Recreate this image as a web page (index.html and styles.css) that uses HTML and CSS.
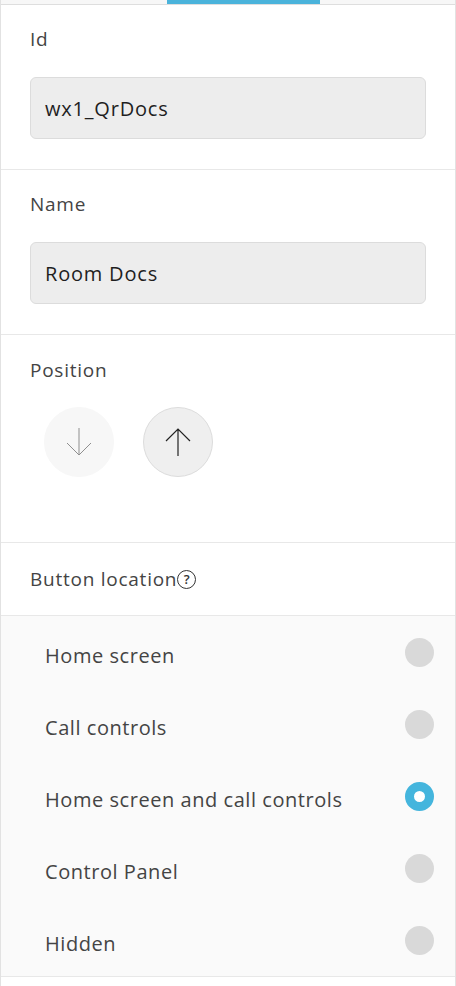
FILE: index.html
```html
<!DOCTYPE html>
<html>
<head>
<meta charset="utf-8">
<link rel="stylesheet" href="styles.css">
</head>
<body>
<div class="panel">
  <div class="tabs"><div class="tab-active"></div></div>
  <div class="section sec-id">
    <div class="label">Id</div>
    <div class="input">wx1_QrDocs</div>
  </div>
  <div class="section sec-name">
    <div class="label">Name</div>
    <div class="input">Room Docs</div>
  </div>
  <div class="section sec-pos">
    <div class="label">Position</div>
    <div class="pos-buttons">
      <div class="circle-btn disabled">
        <svg width="28" height="30" viewBox="0 0 28 30"><path d="M14 1 V28 M2 16 L14 28 L26 16" fill="none" stroke="#8f8f8f" stroke-width="1"/></svg>
      </div>
      <div class="circle-btn">
        <svg width="28" height="30" viewBox="0 0 28 30"><path d="M14 29 V2 M2 14 L14 2 L26 14" fill="none" stroke="#222" stroke-width="1.2"/></svg>
      </div>
    </div>
  </div>
  <div class="section sec-loc">
    <div class="label">Button location<span class="help">?</span></div>
  </div>
  <div class="list">
    <div class="item"><span>Home screen</span><span class="radio"></span></div>
    <div class="item"><span>Call controls</span><span class="radio"></span></div>
    <div class="item"><span>Home screen and call controls</span><span class="radio checked"></span></div>
    <div class="item"><span>Control Panel</span><span class="radio"></span></div>
    <div class="item"><span>Hidden</span><span class="radio"></span></div>
  </div>
</div>
</body>
</html>
```
FILE: styles.css
```css
html, body {
  margin: 0;
  padding: 0;
  background: #fff;
}
body {
  font-family: "Open Sans", "Liberation Sans", sans-serif;
  color: #444;
}
.panel {
  width: 454px;
  min-height: 986px;
  border-left: 1px solid #e2e2e2;
  border-right: 1px solid #e2e2e2;
  box-sizing: content-box;
}
.tabs {
  height: 4px;
  background: #f7f7f7;
  border-bottom: 1px solid #dedede;
  position: relative;
}
.tab-active {
  position: absolute;
  left: 166px;
  top: 0;
  width: 153px;
  height: 4px;
  background: #4ab3db;
}
.section {
  padding: 22px 29px 30px 29px;
  border-bottom: 1px solid #e8e8e8;
}
.label {
  font-size: 19px;
  letter-spacing: 0.75px;
  line-height: 24px;
  color: #444;
  display: flex;
  align-items: center;
}
.input {
  margin-top: 26px;
  height: 60px;
  border: 1px solid #dcdcdc;
  border-radius: 6px;
  background: #ededed;
  box-sizing: content-box;
  padding: 0 14px;
  display: flex;
  align-items: center;
  font-size: 20px;
  letter-spacing: 0.8px;
  color: #1f1f1f;
}
.sec-pos {
  padding-top: 23px;
  padding-bottom: 65px;
}
.pos-buttons {
  margin-top: 25px;
  display: flex;
  gap: 29px;
  padding-left: 14px;
}
.circle-btn {
  width: 70px;
  height: 70px;
  border-radius: 50%;
  background: #efefef;
  border: 1px solid #dcdcdc;
  box-sizing: border-box;
  display: flex;
  align-items: center;
  justify-content: center;
}
.circle-btn.disabled {
  background: #f7f7f7;
  border-color: #f7f7f7;
}
.sec-loc {
  padding-top: 24px;
  padding-bottom: 24px;
}
.help {
  display: inline-flex;
  width: 17px;
  height: 17px;
  border: 1.5px solid #333;
  border-radius: 50%;
  align-items: center;
  justify-content: center;
  font-size: 13px;
  line-height: 1;
  letter-spacing: 0;
  color: #333;
  margin-left: 0;
  font-weight: 600;
}
.list {
  background: #fafafa;
  border-bottom: 1px solid #e8e8e8;
}
.item {
  height: 72px;
  display: flex;
  align-items: center;
  justify-content: space-between;
  padding: 0 21px 0 44px;
  font-size: 20px;
  letter-spacing: 0.55px;
  color: #444;
}
.item span:first-child {
  padding-top: 6px;
}
.radio {
  width: 29px;
  height: 29px;
  border-radius: 50%;
  background: #d9d9d9;
  box-sizing: border-box;
}
.radio.checked {
  background: #fff;
  border: 9px solid #44b5dd;
}
```
